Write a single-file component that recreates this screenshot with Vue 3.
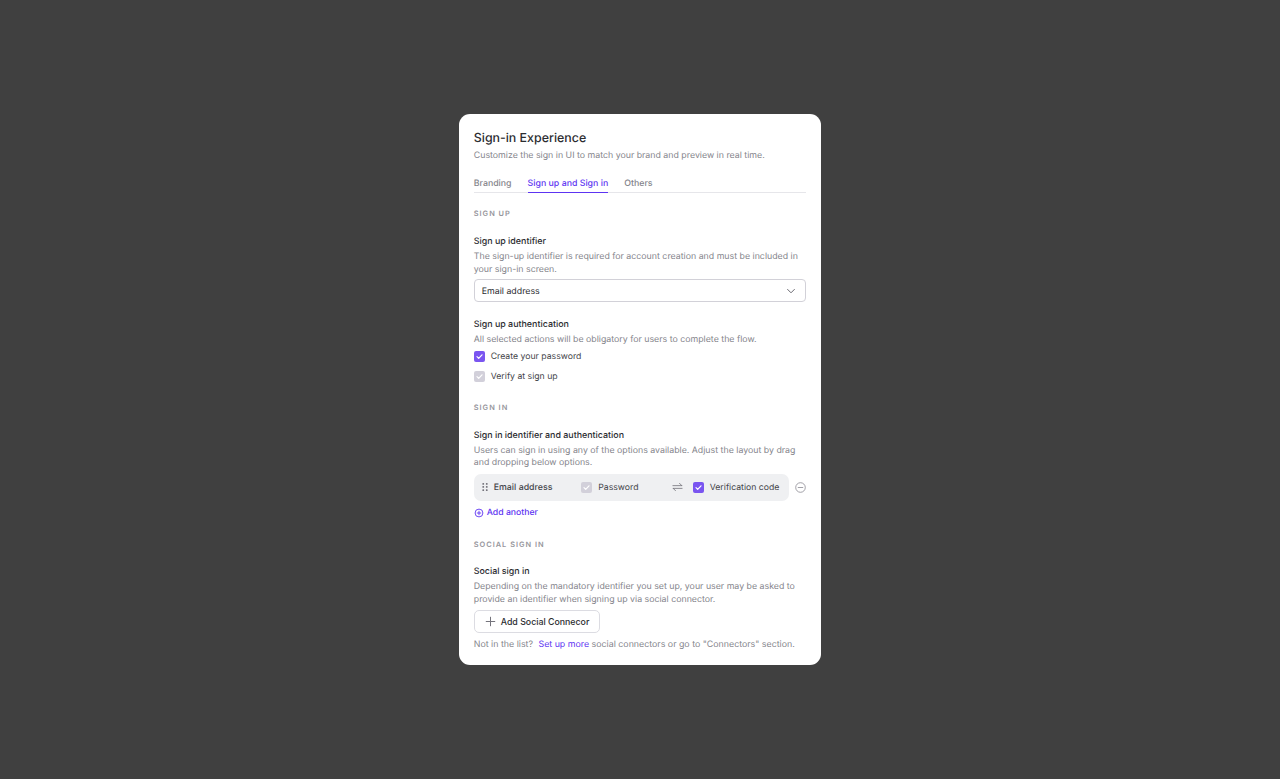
<script setup>
const signUpOptions = [
  { id: 1, label: "Create your password", active: true },
  { id: 2, label: "Verify at sign up", active: false },
];
const tabs = [
  { id: 1, label: "Branding", active: false },
  { id: 2, label: "Sign up and Sign in", active: true },
  { id: 3, label: "Others", active: false },
];
</script>
<template>
  <div class="page">
    <div class="card">
      <h1 class="title">Sign-in Experience</h1>
      <p class="subtitle">Customize the sign in UI to match your brand and preview in real time.</p>

      <div class="tabs">
        <span v-for="tab in tabs" :key="tab.id" class="tab" :class="{ active: tab.active }">{{ tab.label }}</span>
      </div>

      <div class="section-title first">SIGN UP</div>

      <div class="label first-label">Sign up identifier</div>
      <p class="desc">The sign-up identifier is required for account creation and must be included in your sign-in screen.</p>
      <div class="select">
        <span class="select-text">Email address</span>
        <svg width="12" height="12" viewBox="0 0 12 12" fill="none">
          <path d="M2.6 4.4 6 7.8l3.4-3.4" stroke="#6a6971" stroke-width="1" stroke-linecap="round" stroke-linejoin="round" />
        </svg>
      </div>

      <div class="label second-label">Sign up authentication</div>
      <p class="desc">All selected actions will be obligatory for users to complete the flow.</p>
      <div class="checks">
        <div v-for="opt in signUpOptions" :key="opt.id" class="check-row">
          <span class="checkbox" :class="{ on: opt.active }">
            <svg width="11" height="11" viewBox="0 0 11 11" fill="none">
              <path d="M3 5.7 4.7 7.4 8 3.8" stroke="#fff" stroke-width="1.2" stroke-linecap="round" stroke-linejoin="round" />
            </svg>
          </span>
          <span class="check-text">{{ opt.label }}</span>
        </div>
      </div>

      <div class="section-title sign-in">SIGN IN</div>

      <div class="label first-label">Sign in identifier and authentication</div>
      <p class="desc">Users can sign in using any of the options available. Adjust the layout by drag and dropping below options.</p>
      <div class="method-line">
        <div class="method">
          <svg class="drag" width="6" height="8" viewBox="0 0 6 8">
            <g fill="#75747c">
              <rect x="0.4" y="0" width="1.7" height="1.7" rx="0.5" />
              <rect x="3.9" y="0" width="1.7" height="1.7" rx="0.5" />
              <rect x="0.4" y="3.1" width="1.7" height="1.7" rx="0.5" />
              <rect x="3.9" y="3.1" width="1.7" height="1.7" rx="0.5" />
              <rect x="0.4" y="6.2" width="1.7" height="1.7" rx="0.5" />
              <rect x="3.9" y="6.2" width="1.7" height="1.7" rx="0.5" />
            </g>
          </svg>
          <span class="method-name">Email address</span>
          <span class="checkbox">
            <svg width="11" height="11" viewBox="0 0 11 11" fill="none">
              <path d="M3 5.7 4.7 7.4 8 3.8" stroke="#fff" stroke-width="1.2" stroke-linecap="round" stroke-linejoin="round" />
            </svg>
          </span>
          <span class="check-text pass-text">Password</span>
          <svg class="swap" width="11" height="10" viewBox="0 0 12 10" fill="none">
            <path d="M1 3.5h9.6M8.2 1l2.5 2.5M11 6.5H1.4M3.8 9 1.3 6.5" stroke="#75747c" stroke-width="0.9" stroke-linecap="round" stroke-linejoin="round" />
          </svg>
          <span class="checkbox on">
            <svg width="11" height="11" viewBox="0 0 11 11" fill="none">
              <path d="M3 5.7 4.7 7.4 8 3.8" stroke="#fff" stroke-width="1.2" stroke-linecap="round" stroke-linejoin="round" />
            </svg>
          </span>
          <span class="check-text">Verification code</span>
        </div>
        <svg class="minus" width="11" height="11" viewBox="0 0 11 11" fill="none">
          <circle cx="5.5" cy="5.5" r="4.8" stroke="#97969e" stroke-width="0.9" />
          <path d="M3.2 5.5h4.6" stroke="#97969e" stroke-width="0.9" stroke-linecap="round" />
        </svg>
      </div>
      <div class="add-another">
        <svg width="10" height="10" viewBox="0 0 10 10" fill="none">
          <circle cx="5" cy="5" r="3.9" stroke="#5d34f2" stroke-width="0.9" />
          <path d="M5 3.2v3.6M3.2 5h3.6" stroke="#5d34f2" stroke-width="0.9" stroke-linecap="round" />
        </svg>
        <span>Add another</span>
      </div>

      <div class="section-title social">SOCIAL SIGN IN</div>

      <div class="label social-label">Social sign in</div>
      <p class="desc">Depending on the mandatory identifier you set up, your user may be asked to provide an identifier when signing up via social connector.</p>
      <button class="add-btn">
        <svg width="11" height="11" viewBox="0 0 11 11" fill="none">
          <path d="M5.5 1.2v8.6M1.2 5.5h8.6" stroke="#75747c" stroke-width="1" stroke-linecap="round" />
        </svg>
        <span>Add Social Connecor</span>
      </button>
      <p class="foot">Not in the list? <a class="link">Set up more</a> social connectors or go to "Connectors" section.</p>
    </div>
  </div>
</template>

<style>
body {
  background-color: #404040;
}
</style>

<style scoped>
.page {
  width: 1280px;
  height: 779px;
  background-color: #404040;
  display: flex;
  justify-content: center;
  padding-top: 114px;
  box-sizing: border-box;
  font-family: Inter, "Liberation Sans", sans-serif;
  text-rendering: geometricPrecision;
}

.card {
  width: 362.5px;
  height: 551px;
  box-sizing: border-box;
  background-color: #fff;
  border-radius: 11px;
  padding: 16px 15px 0;
}

.title {
  margin: 0;
  font-size: 12.4px;
  line-height: 16px;
  font-weight: 500;
  color: #2b2c30;
}

.subtitle {
  margin: 4px 0 0;
  font-size: 8.8px;
  line-height: 12px;
  color: #85858c;
}

.tabs {
  display: flex;
  gap: 16px;
  margin-top: 16px;
  border-bottom: 1px solid #e6e6ea;
  height: 14px;
}

.tab {
  font-size: 8.8px;
  line-height: 12px;
  color: #85858c;
  font-weight: 500;
  height: 14px;
  box-sizing: border-box;
}

.tab.active {
  color: #5d34f2;
  border-bottom: 1px solid #5d34f2;
  height: 15px;
}

.section-title {
  margin-top: 19px;
  font-size: 7.4px;
  line-height: 10px;
  font-weight: 600;
  letter-spacing: 1px;
  color: #96969c;
}

.section-title.first {
  margin-top: 16px;
}

.section-title.sign-in {
  margin-top: 21px;
}

.section-title.social {
  margin-top: 21px;
}

.label {
  font-size: 8.9px;
  line-height: 12px;
  font-weight: 500;
  color: #2b2c30;
}

.first-label {
  margin-top: 17px;
}

.second-label {
  margin-top: 17px;
}

.social-label {
  margin-top: 16px;
}

.desc {
  margin: 3px 0 0;
  font-size: 8.8px;
  line-height: 12.6px;
  color: #85858c;
}

.select {
  margin-top: 3px;
  height: 23px;
  box-sizing: border-box;
  border: 1px solid #d2d1d8;
  border-radius: 4px;
  display: flex;
  align-items: center;
  justify-content: space-between;
  padding: 0 8px 0 7px;
  font-size: 8.8px;
  color: #2b2c30;
}

.select-text {
  padding-top: 1px;
}

.checks {
  margin-top: 4px;
  display: flex;
  flex-direction: column;
  gap: 9px;
}

.check-row {
  display: flex;
  align-items: center;
  height: 11px;
}

.checkbox {
  width: 11px;
  height: 11px;
  border-radius: 2px;
  background-color: #d2d0da;
  display: flex;
  flex-shrink: 0;
}

.checkbox.on {
  background-color: #7a55f0;
}

.check-text {
  margin-left: 6px;
  padding-top: 2px;
  font-size: 8.7px;
  line-height: 11px;
  color: #44454a;
}

.method-line {
  margin-top: 4px;
  display: flex;
  align-items: center;
}

.method {
  width: 315px;
  height: 27px;
  background-color: #eff0f2;
  border-radius: 7px;
  display: flex;
  align-items: center;
  padding-left: 8px;
  box-sizing: border-box;
}

.drag {
  flex-shrink: 0;
}

.method-name {
  margin-left: 6px;
  width: 87.5px;
  font-size: 8.8px;
  line-height: 11px;
  font-weight: 500;
  color: #44454a;
}

.pass-text {
  width: 73.5px;
}

.swap {
  flex-shrink: 0;
  margin-right: 10px;
}

.minus {
  margin-left: 6px;
  flex-shrink: 0;
}

.add-another {
  margin-top: 6px;
  height: 12px;
  display: flex;
  align-items: center;
  gap: 3px;
  font-size: 8.7px;
  font-weight: 500;
  color: #5d34f2;
}

.add-btn {
  margin-top: 4px;
  display: flex;
  align-items: center;
  width: 126px;
  height: 23px;
  box-sizing: border-box;
  padding: 0 0 0 10px;
  gap: 5px;
  background-color: #fff;
  border: 1px solid #dcdce2;
  border-radius: 5px;
  font-family: inherit;
  font-size: 8.8px;
  font-weight: 500;
  color: #2b2c30;
}

.foot {
  margin: 6px 0 0;
  font-size: 8.83px;
  line-height: 12px;
  color: #85858c;
}

.link {
  color: #5d34f2;
  margin-left: 3px;
}
</style>
